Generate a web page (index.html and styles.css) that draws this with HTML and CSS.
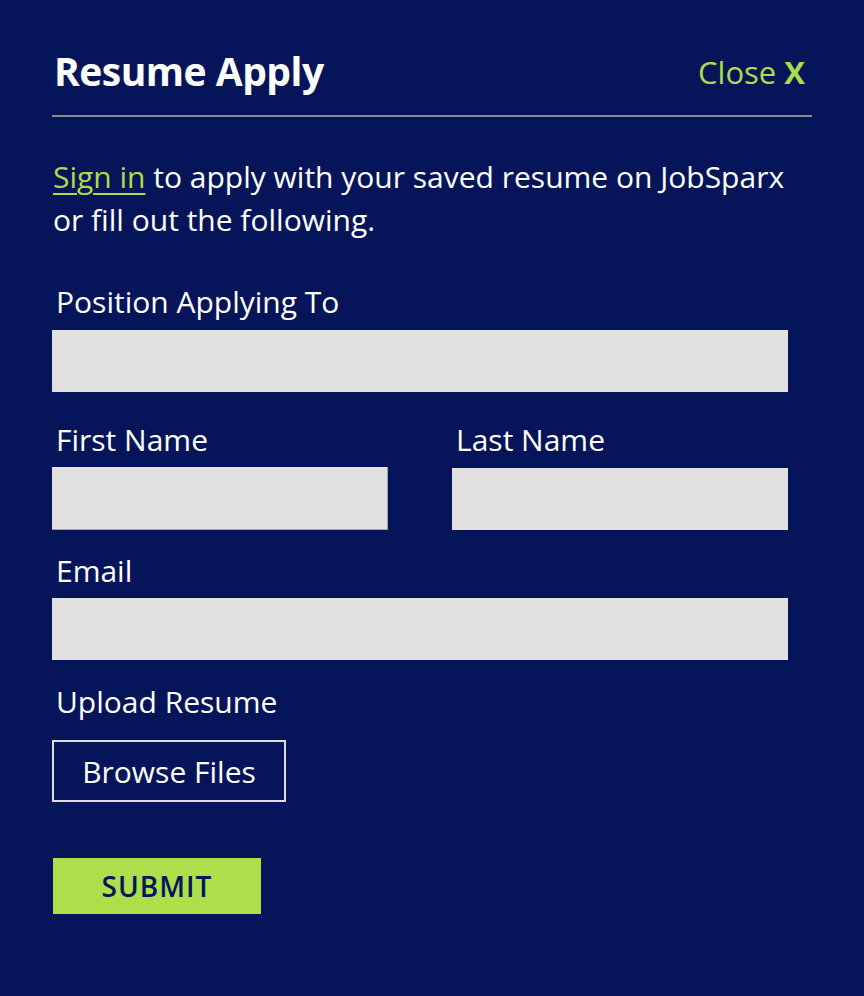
FILE: index.html
```html
<!DOCTYPE html>
<html lang="en">
<head>
<meta charset="utf-8">
<title>Resume Apply</title>
<link rel="stylesheet" href="styles.css">
</head>
<body>
<div class="modal">
  <header class="modal-header">
    <h1 class="title">Resume Apply</h1>
    <a class="close" href="#">Close <b>X</b></a>
  </header>
  <p class="intro"><a class="signin" href="#">Sign in</a> to apply with your saved resume on JobSparx or fill out the following.</p>
  <form class="form">
    <div class="field field-position">
      <label class="label">Position Applying To</label>
      <input class="input" type="text">
    </div>
    <div class="row">
      <div class="field">
        <label class="label">First Name</label>
        <input class="input input-first" type="text">
      </div>
      <div class="field">
        <label class="label">Last Name</label>
        <input class="input input-last" type="text">
      </div>
    </div>
    <div class="field field-email">
      <label class="label">Email</label>
      <input class="input" type="text">
    </div>
    <div class="field field-upload">
      <label class="label">Upload Resume</label>
      <button type="button" class="browse">Browse Files</button>
    </div>
    <button type="button" class="submit">SUBMIT</button>
  </form>
</div>
</body>
</html>
```
FILE: styles.css
```css
html, body {
  margin: 0;
  padding: 0;
  background: #061559;
}
body {
  font-family: "Open Sans", "Liberation Sans", sans-serif;
  color: #ffffff;
  height: 996px;
  overflow: hidden;
}
.modal {
  width: 760px;
  margin-left: 52px;
  padding-top: 44px;
}
.modal-header {
  display: flex;
  justify-content: space-between;
  align-items: baseline;
  border-bottom: 2px solid #8c8c8c;
  padding: 0 7px 17px 2px;
}
.title {
  margin: 0;
  font-size: 39px;
  font-weight: 700;
  line-height: 54px;
  letter-spacing: -0.5px;
}
.close {
  color: #aadd48;
  text-decoration: none;
  font-size: 31px;
  position: relative;
  top: -2px;
}
.close b {
  font-weight: 700;
}
.intro {
  margin: 38px 0 0 1px;
  font-size: 30px;
  line-height: 43px;
  width: 760px;
}
.signin {
  color: #aadd48;
  text-decoration: underline;
  text-decoration-thickness: 2px;
  text-underline-offset: 5px;
}
.form {
  display: flex;
  flex-direction: column;
  width: 736px;
  margin-top: 41px;
}
.field {
  display: flex;
  flex-direction: column;
}
.label {
  font-size: 30px;
  line-height: 40px;
  padding-left: 4px;
  margin-bottom: 8px;
}
.input {
  display: block;
  box-sizing: border-box;
  width: 100%;
  height: 62px;
  margin: 0;
  border: 0;
  background: #e1e1e1;
  font: inherit;
}
.row {
  display: grid;
  grid-template-columns: 336px 336px;
  column-gap: 64px;
  margin-top: 28px;
}
.row .label {
  margin-bottom: 7px;
}
.input-first {
  height: 63px;
  border-right: 1px solid #a0a0a0;
  border-bottom: 1px solid #a0a0a0;
}
.input-last {
  margin-top: 1px;
}
.field-email {
  margin-top: 21px;
}
.field-email .label {
  margin-bottom: 7px;
}
.field-upload {
  margin-top: 22px;
  align-items: flex-start;
}
.field-upload .label {
  margin-bottom: 18px;
}
.browse {
  box-sizing: border-box;
  width: 234px;
  height: 62px;
  background: transparent;
  border: 2px solid #dedede;
  color: #ffffff;
  font-family: "Open Sans", "Liberation Sans", sans-serif;
  font-size: 30px;
  padding: 0;
  margin: 0;
}
.submit {
  box-sizing: border-box;
  align-self: flex-start;
  margin: 56px 0 0 1px;
  width: 208px;
  height: 56px;
  background: #acdf4a;
  border: 0;
  color: #061559;
  font-family: "Open Sans", "Liberation Sans", sans-serif;
  font-size: 28px;
  font-weight: 600;
  letter-spacing: 1px;
  padding: 0;
}
```
